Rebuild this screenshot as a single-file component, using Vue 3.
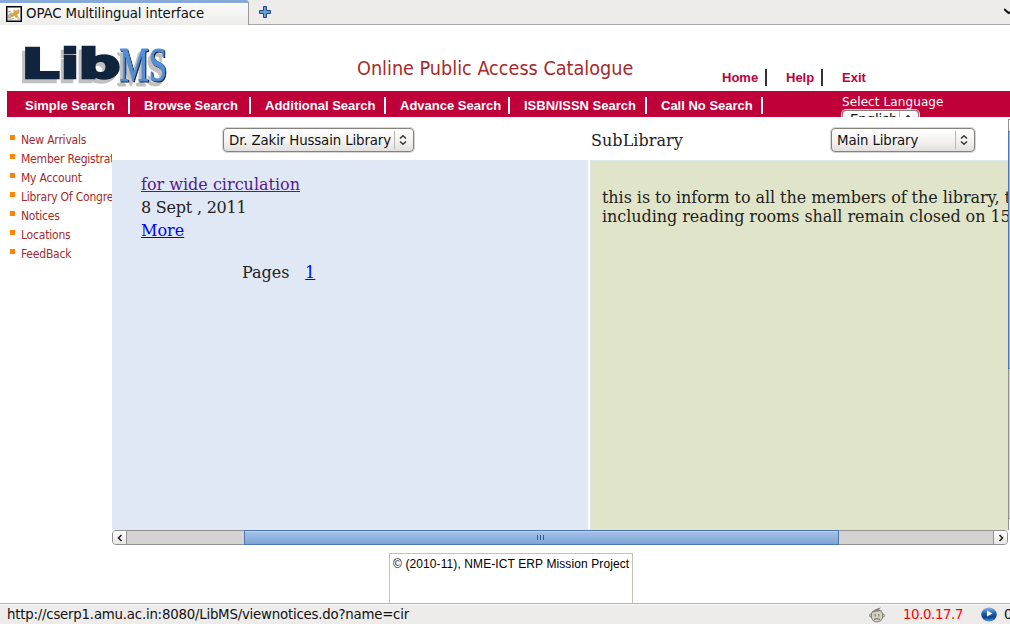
<script setup>
const searches = ['Simple Search', 'Browse Search', 'Additional Search', 'Advance Search', 'ISBN/ISSN Search', 'Call No Search']
const sideLinks = ['New Arrivals', 'Member Registration', 'My Account', 'Library Of Congress', 'Notices', 'Locations', 'FeedBack']
</script>

<template>
  <div class="window">
    <div class="tabbar">
      <div class="tab">
        <svg class="favicon" width="16" height="16" viewBox="0 0 16 16">
          <rect x=".75" y=".75" width="14.5" height="14.5" fill="#fff" stroke="#000" stroke-width="1.5" />
          <path d="M2 9l3-3 2 2-3 4H2z" fill="#b5b5ac" />
          <path d="M7.500 3L9 4.500h2L12.500 3l1 2-.5 2.500-2 1 2 3.500-3-.5-2-1.500-4.500 2.500 2-4 2-2z" fill="#d9a441" />
          <path d="M2 13h4l2-1M11 13h3M2 6l3-1" stroke="#a5a39a" fill="none" />
        </svg>
        <span class="tab-title">OPAC Multilingual interface</span>
      </div>
      <svg class="plus" width="12" height="12" viewBox="0 0 12 12">
        <path d="M4.500 .5h3v4h4v3h-4v4h-3v-4h-4v-3h4z" fill="#6d9bd3" stroke="#204a87" stroke-linejoin="round" />
      </svg>
      <svg class="tab-list" width="6" height="7" viewBox="0 0 6 7"><path d="M0 1l4.500 4L6 4" fill="none" stroke="#111" stroke-width="2" /></svg>
    </div>

    <header class="header">
      <svg class="logo" width="160" height="50" viewBox="0 0 160 50">
        <text class="lib" x="0.500" y="38" textLength="38" lengthAdjust="spacingAndGlyphs">L</text>
        <text class="lib" x="40" y="38" textLength="18" lengthAdjust="spacingAndGlyphs">i</text>
        <text class="lib" x="57.500" y="38" textLength="42" lengthAdjust="spacingAndGlyphs">b</text>
        <text class="ms" x="98.500" y="41" textLength="47.500" lengthAdjust="spacingAndGlyphs">MS</text>
      </svg>
      <h1 class="title">Online Public Access Catalogue</h1>
      <nav class="top-links">
        <a>Home</a><a>Help</a><a>Exit</a>
      </nav>
    </header>

    <nav class="nav">
      <a v-for="s in searches" :key="s" class="search">{{ s }}</a>
      <div class="language">
        <span class="language-label">Select Language</span>
        <div class="select language-select">
          <span>English</span>
          <i class="arrows"><svg width="8" height="10" viewBox="0 0 8 10"><path d="M1 3.500L4 .8l3 2.700M1 6.500l3 2.700 3-2.700" /></svg></i>
        </div>
      </div>
    </nav>

    <main class="main">
      <ul class="side">
        <li v-for="l in sideLinks" :key="l">{{ l }}</li>
      </ul>
      <section class="frame">
        <div class="filters">
          <div class="select library">
            <span>Dr. Zakir Hussain Library</span>
            <i class="arrows"><svg width="8" height="10" viewBox="0 0 8 10"><path d="M1 3.500L4 .8l3 2.700M1 6.500l3 2.700 3-2.700" /></svg></i>
          </div>
          <span class="sub-label">SubLibrary</span>
          <div class="select sublibrary">
            <span>Main Library</span>
            <i class="arrows"><svg width="8" height="10" viewBox="0 0 8 10"><path d="M1 3.500L4 .8l3 2.700M1 6.500l3 2.700 3-2.700" /></svg></i>
          </div>
        </div>
        <div class="panes">
          <div class="notices">
            <a class="visited">for wide circulation</a>
            <span class="date">8 Sept , 2011</span>
            <a>More</a>
            <p class="pages">Pages <a>1</a></p>
          </div>
          <div class="notice">
            <p>this is to inform to all the members of the library, that<br>including reading rooms shall remain closed on 15th</p>
          </div>
        </div>
        <div class="hscroll">
          <span class="btn left"><svg width="6" height="8" viewBox="0 0 6 8"><path d="M4.500 1l-3 3 3 3" /></svg></span>
          <span class="thumb"><i></i><i></i><i></i></span>
          <span class="btn right"><svg width="6" height="8" viewBox="0 0 6 8"><path d="M1.500 1l3 3-3 3" /></svg></span>
        </div>
      </section>
      <div class="vscroll">
        <span class="vbtn"></span>
        <span class="vthumb"></span>
        <span class="vtrack"></span>
        <span class="vbtn end"></span>
      </div>
    </main>

    <footer class="footer">
      <div class="copyright"><span>© (2010-11), NME-ICT ERP Mission Project</span></div>
    </footer>

    <div class="status">
      <span class="url">http://cserp1.amu.ac.in:8080/LibMS/viewnotices.do?name=cir</span>
      <svg class="monkey" width="16" height="16" viewBox="0 0 16 16">
        <circle cx="2" cy="8.500" r="1.500" fill="#c9c2b8" stroke="#8a857c" />
        <circle cx="14" cy="8.500" r="1.500" fill="#c9c2b8" stroke="#8a857c" />
        <path d="M2.500 6Q4 3 8 3q4-.5 5.500 3v5q-1 4-5.500 4t-5.500-4z" fill="#d5cfc4" stroke="#8a857c" />
        <path d="M2.500 6Q5 1.500 12 .5L10 2.500l3.500 1.500Q8 4 2.500 6z" fill="#8a857c" />
        <path d="M6.200 7v2.500M9.800 7v2.500M5 12.500q3-2 6 0" stroke="#6c675f" fill="none" />
      </svg>
      <span class="ip">10.0.17.7</span>
      <svg class="play" width="16" height="15" viewBox="0 0 16 15">
        <defs><linearGradient id="orb" x2="0" y2="1"><stop stop-color="#8cb6e2" /><stop offset=".45" stop-color="#1e5ca8" /><stop offset=".7" stop-color="#114384" /><stop offset="1" stop-color="#48a0df" /></linearGradient></defs>
        <ellipse cx="8" cy="7.500" rx="7.800" ry="7" fill="url(#orb)" />
        <path d="M6 3.500v6l5.500-3z" fill="#fff" />
      </svg>
      <span class="count">0</span>
    </div>
  </div>
</template>

<style>
body { margin: 0; overflow: hidden; }
</style>

<style scoped>
* { box-sizing: border-box; }
.window { width: 1010px; height: 624px; overflow: hidden; background: #fff; display: flex; flex-direction: column; white-space: nowrap; }
.window > * { flex: none; }

.tabbar { height: 25px; background: #edeceb; display: flex; border-bottom: 1px solid #aaa7a5; }
.tab { width: 249px; height: 25px; padding: 1px 0 0 6px; display: flex; align-items: center; border-top: 3px solid #86a9d8; border-right: 1px solid #9c9a98; border-radius: 0 3px 0 0; background: linear-gradient(#fafafa, #eeedec); box-shadow: inset 0 1px #fff; }
.tab-title { margin: -1px 0 0 4px; font: 13.33px/18px "DejaVu Sans", sans-serif; letter-spacing: -.11px; color: #111; }
.favicon { margin-top: -1px; }
.plus { margin: 6px 0 0 10px; }
.tab-list { margin: 8px 0 0 auto; }

.header { height: 66px; display: flex; }
.logo { margin: 15px 0 0 21px; overflow: visible; filter: drop-shadow(-3px 4px 0 #c0c0c0); }
.lib { font: bold 40px "DejaVu Sans", sans-serif; fill: #10243e; stroke: #10243e; stroke-width: 2.500px; }
.ms { font: 49px "Liberation Serif", serif; fill: #558ed5; stroke: #558ed5; stroke-width: 1px; filter: drop-shadow(1px 1px 0 #10243e); }
.title { margin: 31px 0 0 176px; width: 365px; font: 19.64px/26px "DejaVu Sans Condensed", "DejaVu Sans", sans-serif; color: #a52a2a; }
.top-links { margin-top: 44px; display: grid; grid-template-columns: 64px 56px 60px; height: 17px; }
.top-links a { font: bold 13px/17px "Liberation Sans", Arial, sans-serif; color: #c00038; }
.top-links a:not(:last-child) { border-right: 2px solid #333; width: 45px; }
.top-links a:nth-child(2) { width: 37px; }

.nav { height: 26px; margin-left: 7px; padding-left: 18px; background: #c00038; color: #fff; display: grid; grid-template-columns: 119px 121px 135px 124px 137px 181px 160px; overflow: hidden; }
.search { margin: 6px 14px 0 0; height: 17px; border-right: 2px solid #fff; font: bold 13px/17px "Liberation Sans", Arial, sans-serif; }
.search:nth-child(6) { width: 102px; }
.language { display: flex; flex-direction: column; align-items: flex-start; }
.language-label { font: 12px/17px "DejaVu Sans", sans-serif; margin-top: 3px; height: 16px; letter-spacing: .1px; }

.select { height: 24px; border: 1px solid #85827e; border-radius: 4px; background: linear-gradient(#fff, #f2f1f0 60%, #e2e0de); box-shadow: 0 0 0 1px #d8d6d4; display: flex; align-items: center; justify-content: space-between; padding-left: 5px; font: 13.33px/20px "DejaVu Sans", sans-serif; letter-spacing: -.12px; color: #111; }
.select > span { padding-top: 1px; }
.arrows { display: flex; align-items: center; justify-content: center; width: 19px; height: 18px; border-left: 1px solid #bab7b4; padding-right: 3px; }
.arrows path { fill: none; stroke: #333; stroke-width: 1.500; }
.language-select { width: 77px; height: 20px; flex: none; padding-left: 7px; }
.language-select > span { padding: 0; }

.main { height: 428px; display: flex; }
.side { width: 112px; margin: 0; padding: 13px 0 0 10px; list-style: none; overflow: hidden; }
.side li { height: 19px; font: 12px/21px "DejaVu Sans Condensed", "DejaVu Sans", sans-serif; color: #a52a2a; display: flex; letter-spacing: -.2px; }
.side li::before { content: ""; flex: none; width: 5px; height: 5px; margin: 5px 6px 0 0; background: #ff8400; }
.frame { width: 896px; display: flex; flex-direction: column; overflow: hidden; }
.filters { height: 43px; flex: none; display: flex; padding: 11px 0 0 111px; }
.library { width: 191px; }
.sub-label { width: 240px; margin-left: 177px; font: 16px/26px "DejaVu Serif", serif; letter-spacing: .05px; color: #222; }
.sublibrary { width: 144px; }
.panes { height: 370px; display: flex; gap: 2px; }
.notices { width: 476px; background: #e0e7f5; padding: 13px 0 0 29px; display: flex; flex-direction: column; align-items: flex-start; font: 16px/23px "DejaVu Serif", serif; color: #222; }
.notices a { color: #0000ff; text-decoration: underline; }
.notices .visited { color: #551a8b; }
.date { letter-spacing: -.22px; }
.pages { margin: 19px 0 0 101px; }
.pages a { margin-left: 10.500px; }
.notice { width: 418px; background: #e0e5c9; border-left: 1px solid #dce8ef; border-top: 1px solid #dce8ef; padding: 27px 0 0 11px; overflow: hidden; }
.notice p { margin: 0; font: 16px/19px "DejaVu Serif", serif; letter-spacing: -.06px; color: #222; }
.hscroll { height: 15px; display: flex; justify-content: space-between; border: 1px solid #94918f; border-radius: 4px; background: #d4d3d1; }
.btn { width: 14px; height: 13px; background: linear-gradient(#fff, #e8e7e6); display: flex; align-items: center; justify-content: center; border-radius: 3px 0 0 3px; border-right: 1px solid #94918f; }
.btn.right { border-right: 0; border-left: 1px solid #94918f; border-radius: 0 3px 3px 0; }
.btn path { fill: none; stroke: #222; stroke-width: 1.600; }
.thumb { width: 595px; height: 15px; margin: -1px 37px 0 0; border: 1px solid #4f77ad; background: linear-gradient(#a5c3e9, #7fa4d6); box-shadow: inset 0 1px #b4cdec; display: flex; gap: 2px; align-items: center; justify-content: center; padding-right: 3px; }
.thumb i { width: 1px; height: 5px; background: #355b8f; }
.vscroll { width: 2px; margin-top: 2px; height: 411px; display: flex; flex-direction: column; border-left: 1px solid #94918f; background: #d4d3d1; }
.vbtn { height: 12px; background: #fff; border-top: 1px solid #94918f; }
.vthumb { height: 238px; margin-left: -1px; background: #9bbce5; border: 1px solid #4f77ad; border-right: 0; }
.vtrack { flex: 1; }

.footer { height: 58px; padding: 8px 0 0 389px; overflow: hidden; }
.copyright { width: 244px; height: 60px; border: 1px solid #c5c3ae; padding: 3px 0 0 3px; font: 12px/14px "Liberation Sans", Arial, sans-serif; letter-spacing: .1px; color: #000; }

.status { height: 21px; background: #edeceb; border-top: 1px solid #b5b3b1; box-shadow: inset 0 1px #fafafa; display: flex; padding-left: 7px; font: 13.33px/22px "DejaVu Sans", sans-serif; color: #111; letter-spacing: -.22px; }
.status > * { flex: none; }
.url { width: 862px; }
.monkey { margin-top: 3px; }
.ip { margin-left: 18px; width: 78px; color: #f00; letter-spacing: -.4px; }
.play { margin-top: 3px; }
.count { margin-left: 7px; }
</style>
